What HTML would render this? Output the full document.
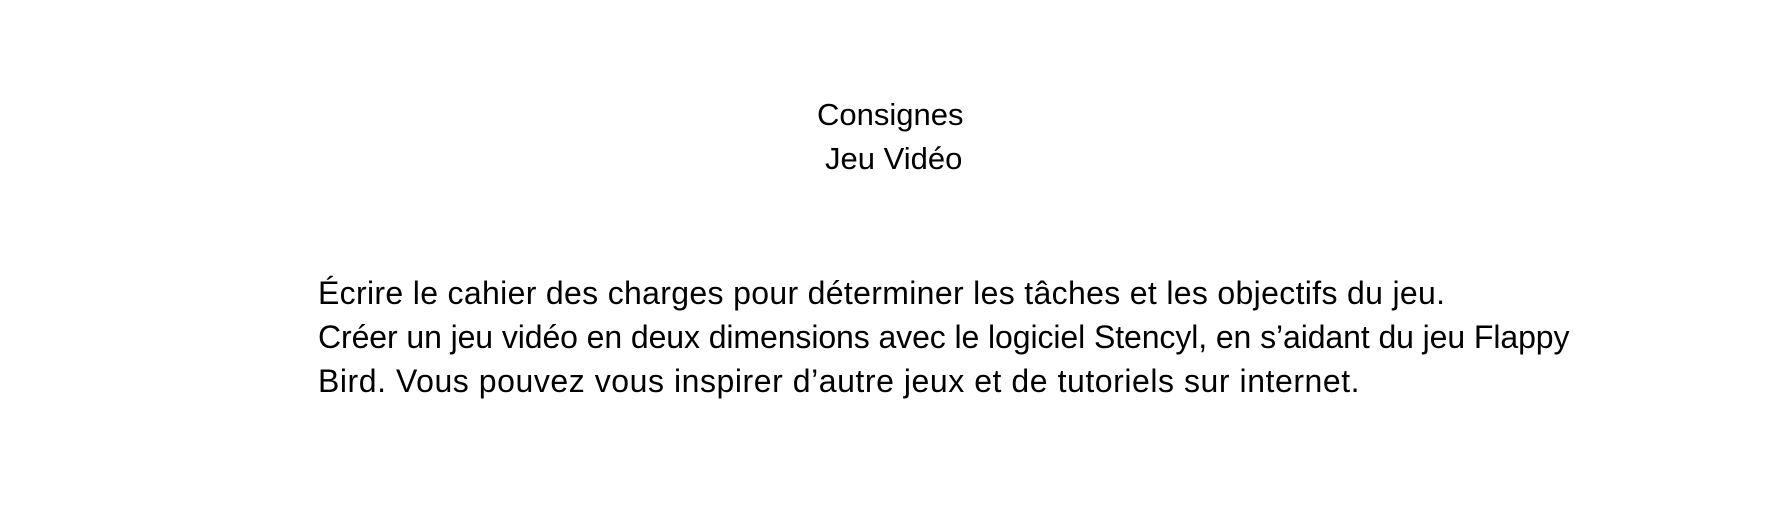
<!DOCTYPE html>
<html><head><meta charset="utf-8"><style>
html,body{margin:0;padding:0;background:#fff;width:1776px;height:516px;overflow:hidden}
body{font-family:"Liberation Sans",sans-serif;color:#000;position:relative}
.t{position:absolute;font-size:32px;line-height:44px;white-space:nowrap;letter-spacing:0}
.t div{height:44px}
</style></head><body>
<div class="t" style="left:817px;top:93px;font-size:31px">Consignes</div>
<div class="t" style="left:825px;top:137px;font-size:31px">Jeu Vidéo</div>
<div class="t" style="left:318px;top:271px">
<div style="letter-spacing:0.33px">Écrire le cahier des charges pour déterminer les tâches et les objectifs du jeu.</div>
<div style="letter-spacing:-0.09px">Créer un jeu vidéo en deux dimensions avec le logiciel Stencyl, en s’aidant du jeu Flappy</div>
<div style="letter-spacing:0.55px">Bird. Vous pouvez vous inspirer d’autre jeux et de tutoriels sur internet.</div>
</div>
</body></html>
